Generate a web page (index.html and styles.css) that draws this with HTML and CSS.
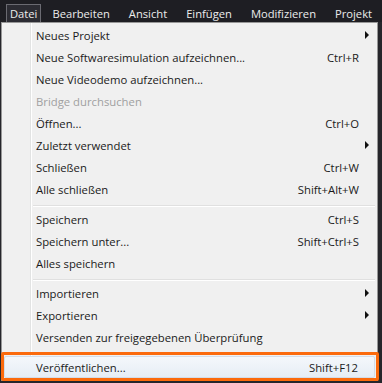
FILE: index.html
```html
<!DOCTYPE html>
<html lang="de">
<head>
    <meta charset="UTF-8">
    <meta name="viewport" content="width=device-width, initial-scale=1.0">
    <title>Datei-Menü</title>
    <link rel="stylesheet" href="styles.css">
</head>
<body>
    <div class="menubar">
        <span class="menubar-item open">Datei</span>
        <span class="menubar-item">Bearbeiten</span>
        <span class="menubar-item">Ansicht</span>
        <span class="menubar-item">Einfügen</span>
        <span class="menubar-item">Modifizieren</span>
        <span class="menubar-item">Projekt</span>
    </div>

    <div class="menu">
        <div class="menu-item"><span class="label">Neues Projekt</span><span class="key"></span><span class="arrow"></span></div>
        <div class="menu-item"><span class="label">Neue Softwaresimulation aufzeichnen...</span><span class="key">Ctrl+R</span><span></span></div>
        <div class="menu-item"><span class="label">Neue Videodemo aufzeichnen...</span><span class="key"></span><span></span></div>
        <div class="menu-item disabled"><span class="label">Bridge durchsuchen</span><span class="key"></span><span></span></div>
        <div class="menu-item"><span class="label">Öffnen...</span><span class="key">Ctrl+O</span><span></span></div>
        <div class="menu-item"><span class="label">Zuletzt verwendet</span><span class="key"></span><span class="arrow"></span></div>
        <div class="menu-item"><span class="label">Schließen</span><span class="key">Ctrl+W</span><span></span></div>
        <div class="menu-item"><span class="label">Alle schließen</span><span class="key">Shift+Alt+W</span><span></span></div>
        <div class="separator"></div>
        <div class="menu-item"><span class="label">Speichern</span><span class="key">Ctrl+S</span><span></span></div>
        <div class="menu-item"><span class="label">Speichern unter...</span><span class="key">Shift+Ctrl+S</span><span></span></div>
        <div class="menu-item"><span class="label">Alles speichern</span><span class="key"></span><span></span></div>
        <div class="separator"></div>
        <div class="menu-item"><span class="label">Importieren</span><span class="key"></span><span class="arrow"></span></div>
        <div class="menu-item"><span class="label">Exportieren</span><span class="key"></span><span class="arrow"></span></div>
        <div class="menu-item"><span class="label">Versenden zur freigegebenen Überprüfung</span><span class="key"></span><span></span></div>
        <div class="separator"></div>
        <div class="menu-item hover"><span class="label">Veröffentlichen...</span><span class="key">Shift+F12</span><span></span></div>
    </div>

    <!-- annotation frame around the highlighted entry -->
    <div class="highlight-frame"></div>
</body>
</html>
```

FILE: styles.css
```css
/* Global */
* {
    margin: 0;
    padding: 0;
    box-sizing: border-box;
}

body {
    background-color: #26262b;
    font-family: 'Open Sans', 'Noto Sans', sans-serif;
    font-size: 11.3px;
    color: #1a1a1a;
    position: relative;
    width: 382px;
    height: 383px;
    overflow: hidden;
}

/* Menubar */
.menubar {
    display: flex;
    height: 22px;
    padding: 4px 0 0 6px;
    background-color: #1e1e23;
    font-size: 11.2px;
}

.menubar-item {
    color: #ececec;
    padding: 0 8px 0 9px;
    line-height: 17px;
    border: 1px solid transparent;
    border-bottom: none;
    white-space: nowrap;
}

.menubar-item.open {
    border-color: #6b6b72;
    background-color: #2c2c33;
    padding: 0 3px;
    margin-right: 1px;
}

/* Dropdown */
.menu {
    margin-left: 1px;
    width: 377px;
    padding: 1px 2px 2px 2px;
    border: 1px solid #979797;
    background-color: #f0f0f0;
    background-image: linear-gradient(to right,
        transparent 28px, #e2e3e3 28px, #e2e3e3 29px,
        #ffffff 29px, #ffffff 30px, transparent 30px);
}

.menu-item {
    display: grid;
    grid-template-columns: 1fr auto 16px;
    align-items: center;
    height: 22px;
    padding-left: 32px;
}

.menu-item .key {
    text-align: right;
    padding-left: 20px;
}

.menu-item.disabled {
    color: #a0a0a0;
}

.arrow {
    justify-self: center;
    width: 0;
    height: 0;
    border-top: 4px solid transparent;
    border-bottom: 4px solid transparent;
    border-left: 4px solid #111;
}

.menu-item.hover {
    background: linear-gradient(#f4f7fb, #e6edf5);
    border: 1px solid #d4dde8;
    border-radius: 2px;
    padding-left: 31px;
}

.separator {
    height: 8px;
    margin-left: 29px;
    padding-top: 5px;
}

.separator::before {
    content: '';
    display: block;
    height: 1px;
    background-color: #e0e0e0;
    border-bottom: 1px solid #ffffff;
    box-sizing: content-box;
}

/* Orange annotation frame */
.highlight-frame {
    position: absolute;
    left: 1px;
    top: 352px;
    width: 378px;
    height: 29px;
    border: 3px solid #fb6a0c;
    border-radius: 2px;
}
```
